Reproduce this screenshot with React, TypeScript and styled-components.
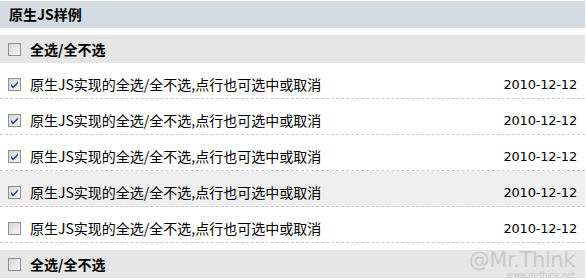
import React, { useState } from "react";
import styled, { createGlobalStyle } from "styled-components";

const Global = createGlobalStyle`
  html, body { margin: 0; padding: 0; background: #fff; }
  body { font-family: "Liberation Sans", "Noto Sans CJK SC", sans-serif; color: #000; }
`;

const Page = styled.div`
  position: relative;
  width: 585px;
  height: 280px;
  overflow: hidden;
  padding-top: 1px;
  box-sizing: border-box;
`;

const Header = styled.div`
  height: 27px;
  line-height: 27px;
  background: #d3dae1;
  padding-left: 9px;
  font-size: 14px;
  font-weight: bold;
  font-family: "Noto Sans CJK SC", sans-serif;
`;

const AllRow = styled.div`
  display: flex;
  align-items: center;
  height: 28px;
  margin-top: 7px;
  background: #e6e6e6;
  padding-left: 8px;
  gap: 9px;
  font-size: 14px;
  font-weight: bold;
  font-family: "Noto Sans CJK SC", sans-serif;
  cursor: pointer;
`;

const List = styled.ul`
  list-style: none;
  margin: 0;
  padding: 0;
`;

const Item = styled.li<{ $hover?: boolean }>`
  display: flex;
  align-items: center;
  height: 24px;
  padding: 9px 8px 2px 8px;
  gap: 9px;
  border-bottom: 1px dashed #cccccc;
  background: ${(p) => (p.$hover ? "#efefef" : "transparent")};
  font-size: 14px;
  cursor: pointer;
`;

const Title = styled.span`
  flex: 1;
  font-family: "Noto Sans CJK SC", sans-serif;
  font-size: 14px;
`;

const DateText = styled.span`
  font-family: "DejaVu Sans", "Liberation Sans", sans-serif;
  font-size: 13px;
  letter-spacing: -0.2px;
`;

const Box = styled.span`
  display: inline-flex;
  width: 13px;
  height: 13px;
  flex: none;
`;

const Watermark = styled.div`
  position: absolute;
  right: 10px;
  bottom: 0;
  text-align: right;
  color: #c9c9c9;
  font-family: "DejaVu Sans", "Liberation Sans", sans-serif;
  pointer-events: none;
`;

const WmBig = styled.div`
  font-size: 21px;
  line-height: 19px;
  letter-spacing: -0.4px;
`;

const WmSmall = styled.div`
  font-size: 8px;
  line-height: 9px;
  margin-top: 1px;
`;

function CheckBox({ checked }: { checked: boolean }) {
  return (
    <Box>
      <svg width="13" height="13" viewBox="0 0 13 13">
        <defs>
          <linearGradient id="cbg" x1="0" y1="0" x2="1" y2="1">
            <stop offset="0" stopColor="#d2d2d2" />
            <stop offset="1" stopColor="#fbfbfb" />
          </linearGradient>
        </defs>
        <rect x="0.5" y="0.5" width="12" height="12" fill="url(#cbg)" stroke="#8e8e8e" />
        {checked && (
          <path d="M3 5.8 L5.2 8.2 L10 3.2 L10 5.6 L5.2 10.6 L3 8.2 Z" fill="#2a4a9c" />
        )}
      </svg>
    </Box>
  );
}

const TEXT = "原生JS实现的全选/全不选,点行也可选中或取消";

export default function App() {
  const [checks, setChecks] = useState([true, true, true, true, false]);
  const all = checks.every(Boolean);
  const toggleAll = () => setChecks(checks.map(() => !all));
  const toggle = (i: number) => setChecks(checks.map((c, j) => (j === i ? !c : c)));
  return (
    <>
      <Global />
      <Page>
        <Header>原生JS样例</Header>
        <AllRow onClick={toggleAll}>
          <CheckBox checked={false} />
          <span>全选/全不选</span>
        </AllRow>
        <List>
          {checks.map((c, i) => (
            <Item key={i} $hover={i === 3} onClick={() => toggle(i)}>
              <CheckBox checked={c} />
              <Title>{TEXT}</Title>
              <DateText>2010-12-12</DateText>
            </Item>
          ))}
        </List>
        <AllRow onClick={toggleAll}>
          <CheckBox checked={false} />
          <span>全选/全不选</span>
        </AllRow>
        <Watermark>
          <WmBig>@Mr.Think</WmBig>
          <WmSmall>www.mrthink.net</WmSmall>
        </Watermark>
      </Page>
    </>
  );
}
